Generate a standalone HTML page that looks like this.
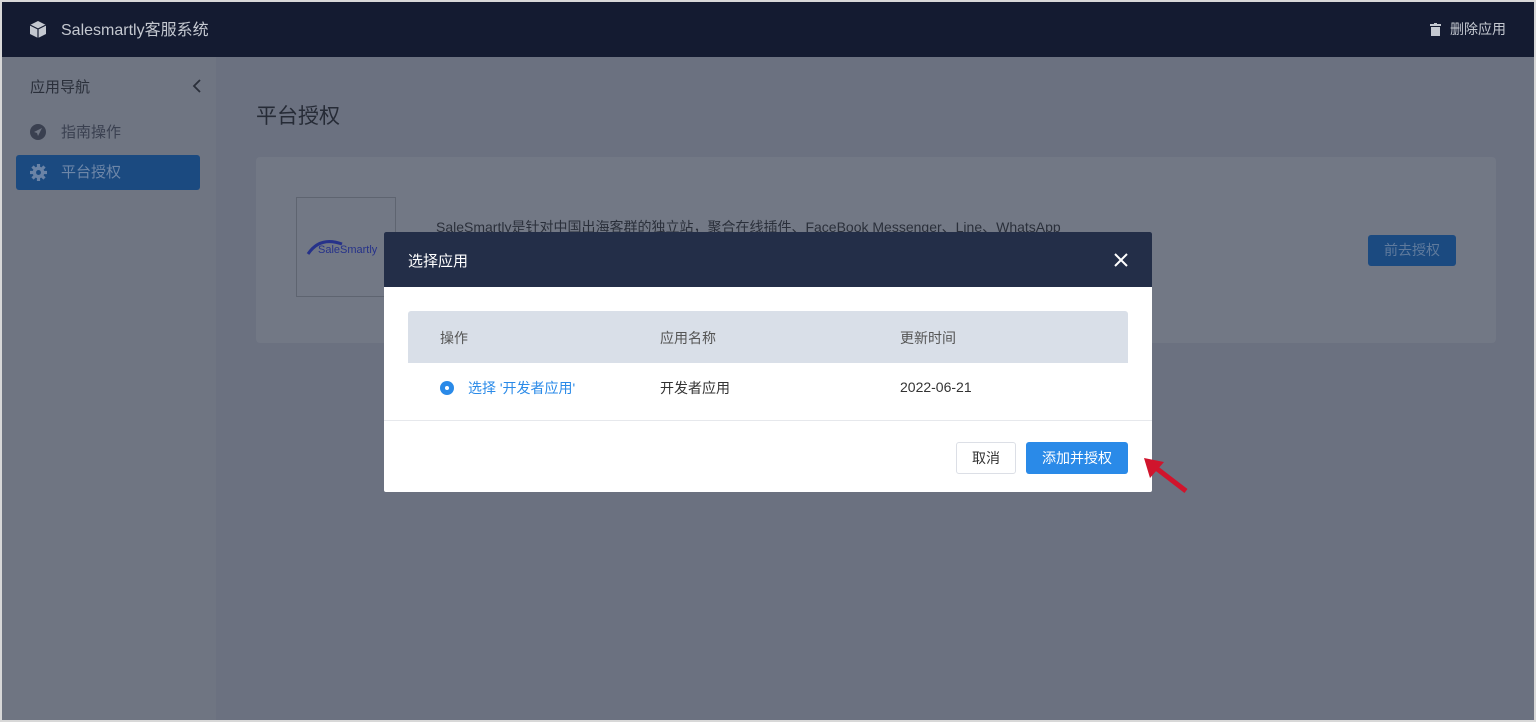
<!DOCTYPE html>
<html><head><meta charset="utf-8"><style>
*{box-sizing:border-box;margin:0;padding:0}
body{width:1536px;height:722px;overflow:hidden;background:#d8d8d8;font-family:"Liberation Sans","Noto Sans CJK SC",sans-serif;position:relative}
.frame{position:absolute;left:2px;top:2px;width:1532px;height:718px;background:#6b7180;overflow:hidden}
.hdr{position:absolute;left:0;top:0;width:100%;height:55px;background:#141b31;color:#c4c8d0}
.side{position:absolute;left:0;top:55px;width:214px;height:663px;background:#6f7582}
.abs{position:absolute;line-height:1.2}
.modal{position:absolute;left:382px;top:230px;width:768px;height:260px;background:#fff;border-radius:2px;overflow:hidden}
</style></head><body><div class="frame">
<div class="hdr">
<svg class="abs" style="left:28px;top:19px" width="16" height="17" viewBox="0 0 16 17"><path d="M8 0L16 4v9L8 17 0 13V4z" fill="#c4c8d0"/><path d="M0 4l8 4 8-4M8 8v9" stroke="#141b31" stroke-width="1.2" fill="none"/></svg>
<div class="abs" style="left:59px;top:19px;font-size:16px">Salesmartly客服系统</div>
<svg class="abs" style="left:1428px;top:21px" width="11" height="13" viewBox="0 0 11 13"><rect x="0" y="1" width="11" height="2" fill="#c4c8d0"/><rect x="4" y="0" width="3" height="2" fill="#c4c8d0"/><rect x="1" y="4" width="9" height="9" fill="#c4c8d0"/></svg>
<div class="abs" style="left:1448px;top:19px;font-size:14px">删除应用</div>
</div>
<div class="side">
<div class="abs" style="left:28px;top:22px;font-size:15px;color:#2a2f3a">应用导航</div>
<svg class="abs" style="left:190px;top:22px" width="10" height="14" viewBox="0 0 10 14"><path d="M8 1L2 7l6 6" stroke="#2a2f3a" stroke-width="1.8" fill="none"/></svg>
<svg class="abs" style="left:28px;top:67px" width="16" height="16" viewBox="0 0 16 16"><circle cx="8" cy="8" r="8" fill="#3a4050"/><path d="M4 8l8-4-4 8-1-3z" fill="#6f7582"/></svg>
<div class="abs" style="left:59px;top:67px;font-size:15px;color:#3a4050">指南操作</div>
<div class="abs" style="left:14px;top:98px;width:184px;height:35px;background:#1b4a80;border-radius:3px"></div>
<svg class="abs" style="left:28px;top:107px" width="17" height="17" viewBox="0 0 16 16"><g fill="#6a83a6"><circle cx="8" cy="8" r="5.5"/><rect x="6.5" y="0" width="3" height="16"/><rect x="0" y="6.5" width="16" height="3"/><rect x="6.5" y="0" width="3" height="16" transform="rotate(45 8 8)"/><rect x="6.5" y="0" width="3" height="16" transform="rotate(-45 8 8)"/></g><circle cx="8" cy="8" r="2.3" fill="#1b4a80"/></svg>
<div class="abs" style="left:59px;top:107px;font-size:15px;color:#6e87a8">平台授权</div>
</div>
<div class="abs" style="left:254px;top:102px;font-size:21px;color:#262b36">平台授权</div>
<div class="abs" style="left:254px;top:155px;width:1240px;height:186px;background:#727885;border-radius:4px"></div>
<div class="abs" style="left:294px;top:195px;width:100px;height:100px;border:1px solid #5e6470"></div>
<svg class="abs" style="left:304px;top:234px" width="40" height="20" viewBox="0 0 40 20"><path d="M2 18Q14 0 36 8" stroke="#26328a" stroke-width="3" fill="none"/></svg>
<div class="abs" style="left:316px;top:242px;font-size:11px;color:#26328a">SaleSmartly</div>
<div class="abs" style="left:434px;top:217px;font-size:14px;color:#2a2f3a">SaleSmartly是针对中国出海客群的独立站，聚合在线插件、FaceBook Messenger、Line、WhatsApp</div>
<div class="abs" style="left:1366px;top:233px;width:88px;height:31px;background:#1b4a80;border-radius:3px;color:#5f7a9c;font-size:14px;text-align:center;line-height:31px">前去授权</div>
<div class="modal">
<div class="abs" style="left:0;top:0;width:768px;height:55px;background:#232e48"></div>
<div class="abs" style="left:24px;top:21px;font-size:15px;color:#fff">选择应用</div>
<svg class="abs" style="left:730px;top:21px" width="14" height="14" viewBox="0 0 14 14"><path d="M1 1l12 12M13 1L1 13" stroke="#fff" stroke-width="2"/></svg>
<div class="abs" style="left:24px;top:79px;width:720px;height:52px;background:#d9dfe8;border-radius:3px 3px 0 0"></div>
<div class="abs" style="left:56px;top:98px;font-size:14px;color:#555">操作</div>
<div class="abs" style="left:276px;top:98px;font-size:14px;color:#555">应用名称</div>
<div class="abs" style="left:516px;top:98px;font-size:14px;color:#555">更新时间</div>
<div class="abs" style="left:56px;top:149px;width:14px;height:14px;border-radius:50%;background:#2a8ae8"></div>
<div class="abs" style="left:61px;top:154px;width:4px;height:4px;border-radius:50%;background:#fff"></div>
<div class="abs" style="left:84px;top:148px;font-size:14px;color:#2a8ae8">选择 '开发者应用'</div>
<div class="abs" style="left:276px;top:148px;font-size:14px;color:#333">开发者应用</div>
<div class="abs" style="left:516px;top:147px;font-size:14px;color:#333">2022-06-21</div>
<div class="abs" style="left:0;top:188px;width:768px;height:1px;background:#e6e8ec"></div>
<div class="abs" style="left:572px;top:210px;width:60px;height:32px;border:1px solid #dcdfe6;border-radius:3px;font-size:14px;color:#333;text-align:center;line-height:30px">取消</div>
<div class="abs" style="left:642px;top:210px;width:102px;height:32px;background:#2a8ae8;border-radius:3px;font-size:14px;color:#fff;text-align:center;line-height:32px">添加并授权</div>
</div>
<svg class="abs" style="left:1140px;top:452px" width="46" height="40" viewBox="0 0 46 40"><path d="M44 37L14 14" stroke="#d0142c" stroke-width="5"/><path d="M2 4L22 8 8 24z" fill="#d0142c"/></svg>
</div></body></html>
